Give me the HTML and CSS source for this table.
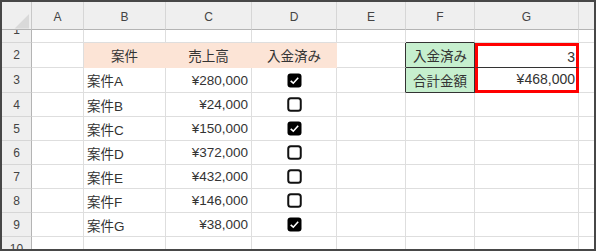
FILE: index.html
```html
<!DOCTYPE html>
<html>
<head>
<meta charset="utf-8">
<title>入金チェック</title>
<link rel="stylesheet" href="styles.css">
</head>
<body>
<div class="frame">
<div class="sheet">
	<!-- 列見出し -->
	<div class="cell corner"><svg width="30" height="28" viewBox="0 0 30 28"><polygon points="28,12 28,27 13,27" fill="#d9d9d9"/></svg></div>
	<div class="cell ch">A</div>
	<div class="cell ch">B</div>
	<div class="cell ch">C</div>
	<div class="cell ch">D</div>
	<div class="cell ch">E</div>
	<div class="cell ch">F</div>
	<div class="cell ch">G</div>
	<div class="cell ch last"></div>

	<!-- 1行目（上が隠れている） -->
	<div class="cell rh cut-top"><span>1</span></div>
	<div class="cell"></div>
	<div class="cell"></div>
	<div class="cell"></div>
	<div class="cell"></div>
	<div class="cell"></div>
	<div class="cell over-label"></div>
	<div class="cell"></div>
	<div class="cell last"></div>

	<!-- 2行目 -->
	<div class="cell rh">2</div>
	<div class="cell"></div>
	<div class="cell head">案件</div>
	<div class="cell head">売上高</div>
	<div class="cell head">入金済み</div>
	<div class="cell before-label"></div>
	<div class="cell label">入金済み</div>
	<div class="cell total top">3</div>
	<div class="cell last"></div>

	<!-- 3行目 -->
	<div class="cell rh">3</div>
	<div class="cell"></div>
	<div class="cell name">案件A</div>
	<div class="cell num">¥280,000</div>
	<div class="cell chk"><svg class="box" viewBox="0 0 15 15"><rect x="0.5" y="0.5" width="14" height="14" rx="3" fill="#000"/><path d="M3.7 7.8 6.3 10.2 11.2 4.8" fill="none" stroke="#fff" stroke-width="1.6"/></svg></div>
	<div class="cell before-label"></div>
	<div class="cell label">合計金額</div>
	<div class="cell total bottom">¥468,000</div>
	<div class="cell last"></div>

	<!-- 4行目 -->
	<div class="cell rh">4</div>
	<div class="cell"></div>
	<div class="cell name">案件B</div>
	<div class="cell num">¥24,000</div>
	<div class="cell chk"><svg class="box" viewBox="0 0 15 15"><rect x="1.25" y="1.25" width="12.5" height="12.5" rx="2.5" fill="#fff" stroke="#111" stroke-width="2"/></svg></div>
	<div class="cell"></div>
	<div class="cell"></div>
	<div class="cell"></div>
	<div class="cell last"></div>

	<!-- 5行目 -->
	<div class="cell rh">5</div>
	<div class="cell"></div>
	<div class="cell name">案件C</div>
	<div class="cell num">¥150,000</div>
	<div class="cell chk"><svg class="box" viewBox="0 0 15 15"><rect x="0.5" y="0.5" width="14" height="14" rx="3" fill="#000"/><path d="M3.7 7.8 6.3 10.2 11.2 4.8" fill="none" stroke="#fff" stroke-width="1.6"/></svg></div>
	<div class="cell"></div>
	<div class="cell"></div>
	<div class="cell"></div>
	<div class="cell last"></div>

	<!-- 6行目 -->
	<div class="cell rh">6</div>
	<div class="cell"></div>
	<div class="cell name">案件D</div>
	<div class="cell num">¥372,000</div>
	<div class="cell chk"><svg class="box" viewBox="0 0 15 15"><rect x="1.25" y="1.25" width="12.5" height="12.5" rx="2.5" fill="#fff" stroke="#111" stroke-width="2"/></svg></div>
	<div class="cell"></div>
	<div class="cell"></div>
	<div class="cell"></div>
	<div class="cell last"></div>

	<!-- 7行目 -->
	<div class="cell rh">7</div>
	<div class="cell"></div>
	<div class="cell name">案件E</div>
	<div class="cell num">¥432,000</div>
	<div class="cell chk"><svg class="box" viewBox="0 0 15 15"><rect x="1.25" y="1.25" width="12.5" height="12.5" rx="2.5" fill="#fff" stroke="#111" stroke-width="2"/></svg></div>
	<div class="cell"></div>
	<div class="cell"></div>
	<div class="cell"></div>
	<div class="cell last"></div>

	<!-- 8行目 -->
	<div class="cell rh">8</div>
	<div class="cell"></div>
	<div class="cell name">案件F</div>
	<div class="cell num">¥146,000</div>
	<div class="cell chk"><svg class="box" viewBox="0 0 15 15"><rect x="1.25" y="1.25" width="12.5" height="12.5" rx="2.5" fill="#fff" stroke="#111" stroke-width="2"/></svg></div>
	<div class="cell"></div>
	<div class="cell"></div>
	<div class="cell"></div>
	<div class="cell last"></div>

	<!-- 9行目 -->
	<div class="cell rh">9</div>
	<div class="cell"></div>
	<div class="cell name">案件G</div>
	<div class="cell num">¥38,000</div>
	<div class="cell chk"><svg class="box" viewBox="0 0 15 15"><rect x="0.5" y="0.5" width="14" height="14" rx="3" fill="#000"/><path d="M3.7 7.8 6.3 10.2 11.2 4.8" fill="none" stroke="#fff" stroke-width="1.6"/></svg></div>
	<div class="cell"></div>
	<div class="cell"></div>
	<div class="cell"></div>
	<div class="cell last"></div>

	<!-- 10行目（下が切れている） -->
	<div class="cell rh cut-bottom"><span>10</span></div>
	<div class="cell end"></div>
	<div class="cell end"></div>
	<div class="cell end"></div>
	<div class="cell end"></div>
	<div class="cell end"></div>
	<div class="cell end"></div>
	<div class="cell end"></div>
	<div class="cell end last"></div>
</div>
</div>
</body>
</html>
```

FILE: styles.css
```css
html,body{
	margin:0;
	padding:0;
	background:#fff;
}
.frame{
	width:596px;
	height:251px;
	box-sizing:border-box;
	border:2px solid #474747;
	overflow:hidden;
	font-family:"Liberation Sans","Noto Sans CJK JP",sans-serif;
	color:#333;
}
.sheet{
	display:grid;
	grid-template-columns:30px 52px 82px 86px 85px 69px 69px 104px 15px;
	grid-template-rows:28px 13px 25px 25px 24px 24px 24px 24px 24px 24px 12px;
	font-size:13.5px;
}
.cell{
	display:flex;
	align-items:center;
	box-sizing:border-box;
	min-width:0;
	overflow:hidden;
	white-space:nowrap;
	border-right:1px solid #dedede;
	border-bottom:1px solid #dedede;
}
.cell.last{
	border-right:none;
}
.cell.end{
	border-bottom:none;
}

/* 見出し */
.corner{
	background:#efefef;
	border-right:1px solid #c8c8c8;
	border-bottom:1px solid #b4b4b4;
	align-items:stretch;
}
.corner svg{
	display:block;
}
.ch{
	justify-content:center;
	background:#efefef;
	border-right-color:#d6d6d6;
	border-bottom:1px solid #b4b4b4;
	font-size:12px;
	color:#444;
	padding-top:2px;
	box-sizing:border-box;
}
.rh{
	justify-content:center;
	background:#efefef;
	border-right:1px solid #b4b4b4;
	border-bottom-color:#d6d6d6;
	font-size:12px;
	color:#444;
}
.rh.cut-top{
	align-items:flex-end;
}
.rh.cut-bottom{
	align-items:flex-start;
	border-bottom:none;
}
.rh.cut-top span,
.rh.cut-bottom span{
	display:block;
	height:24px;
	line-height:24px;
	flex-shrink:0;
}

/* 表 */
.head{
	justify-content:center;
	background:#fce4d6;
	border-color:#fce4d6;
}
.name{
	padding-left:3px;
}
.num{
	justify-content:flex-end;
	padding-right:3px;
}
.chk{
	justify-content:center;
}
.box{
	width:15px;
	height:15px;
	display:block;
}

/* 集計 */
.over-label{
	border-bottom-color:#333;
}
.before-label{
	border-right-color:#333;
}
.label{
	justify-content:center;
	background:#c6efce;
	border-right-color:#333;
	border-bottom-color:#333;
}
.total{
	justify-content:flex-end;
	padding-right:1px;
	border:3px solid #f00;
	font-size:14px;
}
.total.top{
	border-bottom:1px solid #333;
}
.total.bottom{
	border-top:none;
}
```
